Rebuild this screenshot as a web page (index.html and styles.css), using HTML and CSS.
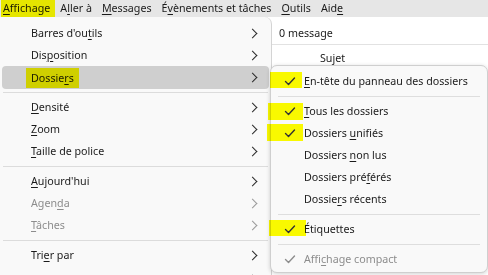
FILE: index.html
```html
<!DOCTYPE html>
<html lang="fr">
<head>
<meta charset="utf-8">
<link rel="stylesheet" href="styles.css">
</head>
<body>
<div class="app">
  <nav class="menubar">
    <span class="mb-item hl-wrap"><span class="hl hl-bar"></span><u>A</u>ffichage</span>
    <span class="mb-item">A<u>l</u>ler à</span>
    <span class="mb-item"><u>M</u>essages</span>
    <span class="mb-item">É<u>v</u>ènements et tâches</span>
    <span class="mb-item"><u>O</u>utils</span>
    <span class="mb-item">Aid<u>e</u></span>
  </nav>
  <div class="main">
    <div class="menu">
      <div class="row"><span class="label">Barres d'ou<u>t</u>ils</span><span class="chev"></span></div>
      <div class="row"><span class="label">Dis<u>p</u>osition</span><span class="chev"></span></div>
      <div class="row active"><span class="label"><span class="hl-wrap"><span class="hl hl-doss"></span>Dossie<u>r</u>s</span></span><span class="chev"></span></div>
      <div class="sep"></div>
      <div class="row"><span class="label"><u>D</u>ensité</span><span class="chev"></span></div>
      <div class="row"><span class="label"><u>Z</u>oom</span><span class="chev"></span></div>
      <div class="row"><span class="label"><u>T</u>aille de police</span><span class="chev"></span></div>
      <div class="sep"></div>
      <div class="row"><span class="label"><u>A</u>ujourd'hui</span><span class="chev"></span></div>
      <div class="row disabled"><span class="label">Agen<u>d</u>a</span><span class="chev"></span></div>
      <div class="row disabled"><span class="label"><u>T</u>âches</span><span class="chev"></span></div>
      <div class="sep"></div>
      <div class="row"><span class="label">Tri<u>e</u>r par</span><span class="chev"></span></div>
      <div class="row last"><span class="label">Messages</span><span class="chev"></span></div>
    </div>
    <div class="pane">
      <div class="count">0 message</div>
      <div class="cols"><span class="col-subject">Sujet</span></div>
    </div>
  </div>

  <div class="submenu">
    <div class="srow checked"><span class="check hl-wrap"><span class="hl hl-c1"></span><svg viewBox="0 0 16 16"><polyline points="3.5,8.5 6.5,11.5 12.5,5"/></svg></span><span class="label"><u>E</u>n-tête du panneau des dossiers</span></div>
    <div class="ssep"></div>
    <div class="srow checked"><span class="check hl-wrap"><span class="hl hl-c2"></span><svg viewBox="0 0 16 16"><polyline points="3.5,8.5 6.5,11.5 12.5,5"/></svg></span><span class="label"><u>T</u>ous les dossiers</span></div>
    <div class="srow checked"><span class="check hl-wrap"><span class="hl hl-c3"></span><svg viewBox="0 0 16 16"><polyline points="3.5,8.5 6.5,11.5 12.5,5"/></svg></span><span class="label">Dossiers <u>u</u>nifiés</span></div>
    <div class="srow"><span class="check"></span><span class="label">Dossiers <u>n</u>on lus</span></div>
    <div class="srow"><span class="check"></span><span class="label">Dossiers pré<u>f</u>érés</span></div>
    <div class="srow"><span class="check"></span><span class="label">Dossie<u>r</u>s récents</span></div>
    <div class="ssep"></div>
    <div class="srow checked"><span class="check hl-wrap"><span class="hl hl-c4"></span><svg viewBox="0 0 16 16"><polyline points="3.5,8.5 6.5,11.5 12.5,5"/></svg></span><span class="label">Étiquettes</span></div>
    <div class="ssep"></div>
    <div class="srow checked disabled"><span class="check"><svg viewBox="0 0 16 16"><polyline points="3.5,8.5 6.5,11.5 12.5,5"/></svg></span><span class="label">Affi<u>c</u>hage compact</span></div>
  </div>
</div>
</body>
</html>
```

FILE: styles.css
```css
* { box-sizing: border-box; }
html, body {
  margin: 0;
  padding: 0;
  width: 488px;
  height: 275px;
  overflow: hidden;
  background: #ffffff;
}
body {
  font-family: "Noto Sans", "Open Sans", sans-serif;
  font-size: 10.7px;
  color: #1b1b1b;
}
u { text-decoration-thickness: 1px; text-underline-offset: 2px; }

.app { position: relative; width: 488px; height: 275px; overflow: hidden; }

.menubar {
  display: flex;
  align-items: center;
  height: 17px;
  background: #e6e6e6;
  padding-left: 3px;
  gap: 10px;
  white-space: nowrap;
}
.mb-item { line-height: 17px; }

.hl-wrap { position: relative; }
.hl {
  position: absolute;
  background: #ffff00;
  mix-blend-mode: multiply;
  pointer-events: none;
}
.hl-bar { left: -2px; right: -5px; top: 0; bottom: 0; }
.hl-doss { left: -5px; right: -5px; top: -3px; bottom: -3px; }

.main { display: flex; height: 258px; overflow: hidden; }

.menu {
  width: 272px;
  flex: none;
  background: #f9f9f9;
  border-right: 1px solid #d4d4d4;
  border-top-right-radius: 7px;
  padding-top: 5px;
  overflow: hidden;
}
.row {
  display: flex;
  align-items: center;
  height: 22px;
  padding-left: 29px;
  padding-right: 12px;
  margin: 0 2px;
  border-radius: 4px;
  white-space: nowrap;
}
.row .label { flex: 1; line-height: 16px; }
.row.active { background: #cfcfcf; height: 23px; margin-bottom: -1px; }
.row.disabled { color: #8d8d8d; }
.row.last { align-items: flex-start; padding-top: 8px; height: 14px; }
.chev {
  width: 6px;
  height: 10px;
  position: relative;
}
.chev::before {
  content: "";
  position: absolute;
  left: -2px;
  top: 1.5px;
  width: 6px;
  height: 6px;
  border-right: 1.2px solid #2a2a2a;
  border-top: 1.2px solid #2a2a2a;
  transform: rotate(45deg);
}
.row.disabled .chev::before { border-color: #9a9a9a; }
.sep {
  height: 8px;
  display: flex;
  align-items: center;
  padding: 0 3px;
}
.sep::before {
  content: "";
  flex: 1;
  height: 1px;
  background: #dcdcdc;
}

.pane { flex: 1; background: #ffffff; }
.count {
  height: 28px;
  line-height: 32px;
  padding-left: 7px;
  border-bottom: 1px solid #e2e2e2;
}
.cols { height: 24px; line-height: 26px; padding-left: 48px; }

.submenu {
  position: absolute;
  left: 270px;
  top: 65px;
  width: 218px;
  height: 208px;
  background: #f9f9f9;
  border: 1px solid #cfcfcf;
  border-radius: 7px;
  box-shadow: 0 1px 4px rgba(0,0,0,0.18);
  padding-top: 4px;
}
.srow {
  display: flex;
  align-items: center;
  height: 22px;
  white-space: nowrap;
}
.srow.disabled { color: #8d8d8d; }
.check {
  width: 33px;
  height: 16px;
  flex: none;
  display: flex;
  align-items: center;
  padding-left: 11px;
}
.check svg {
  width: 16px;
  height: 16px;
  fill: none;
  stroke: #333333;
  stroke-width: 1.4;
  stroke-linecap: round;
  stroke-linejoin: round;
  position: relative;
}
.srow.disabled .check svg { stroke: #8d8d8d; }
.srow .label { line-height: 16px; }
.hl-c1 { left: -1px; top: -1px; width: 32px; height: 16px; }
.hl-c2 { left: -3px; top: 0; width: 35px; height: 17px; }
.hl-c3 { left: -4px; top: -1px; width: 36px; height: 17px; }
.hl-c4 { left: -2px; top: -1px; width: 37px; height: 16px; }
.ssep {
  height: 8px;
  display: flex;
  align-items: center;
  padding: 0 7px;
}
.ssep::before {
  content: "";
  flex: 1;
  height: 1px;
  background: #dedede;
}
```
